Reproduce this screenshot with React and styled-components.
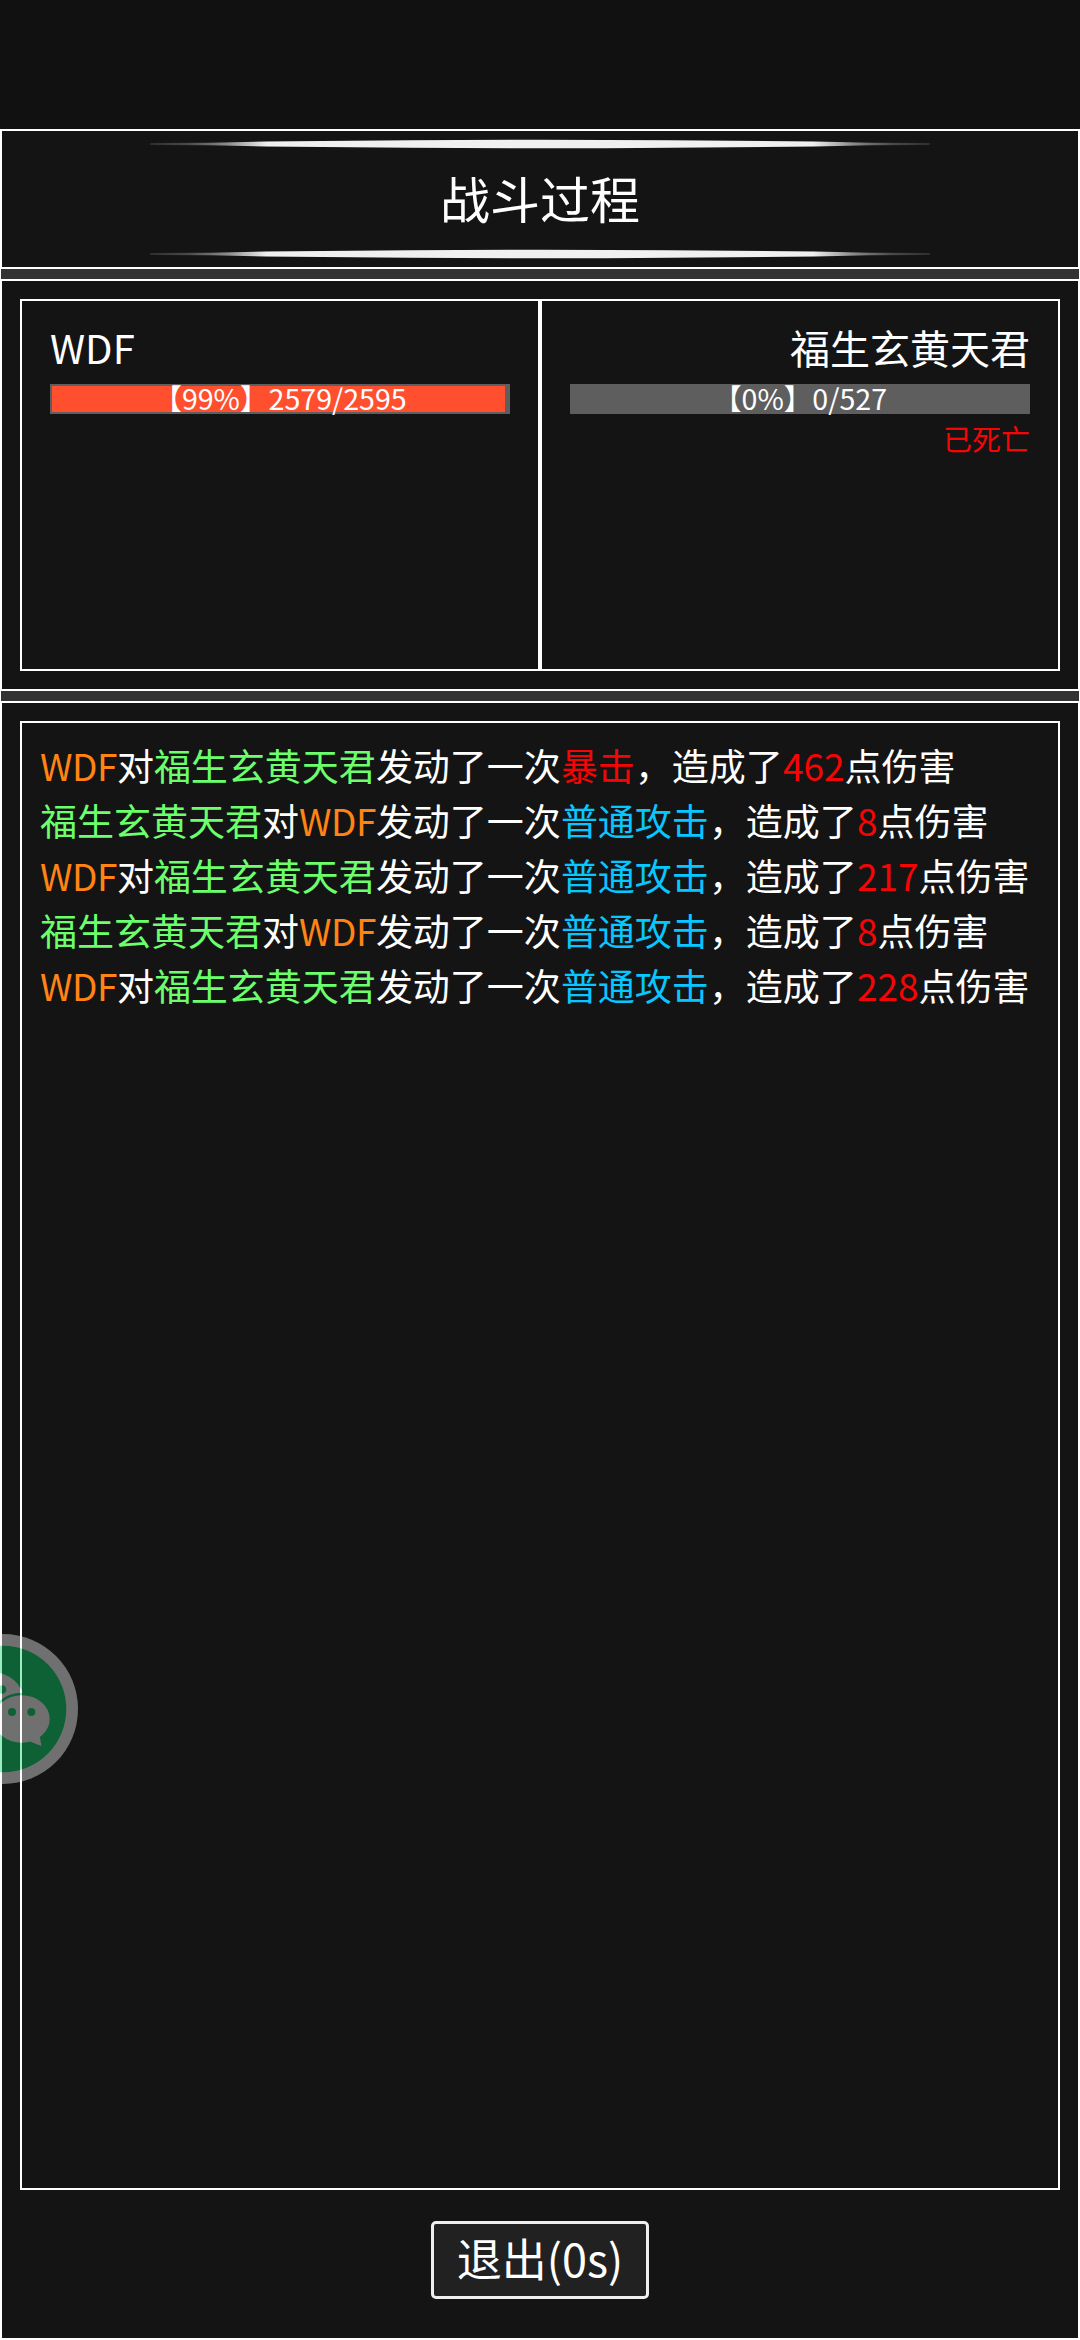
import React from "react";
import styled, { createGlobalStyle } from "styled-components";

const GlobalStyle = createGlobalStyle`
    *{
        box-sizing:border-box;
    }
    body{
        margin:0;
        background:#111111;
        color:#ffffff;
        font-family:"Noto Sans CJK SC", sans-serif;
    }
`;

const Container = styled.div`
    position:relative;
    display:flex;
    flex-direction:column;
    width:1080px;
    height:2340px;
    padding-top:129px;
    overflow:hidden;
`;

const Panel = styled.section`
    display:flex;
    flex-direction:column;
    height:${props => props.$height ? `${props.$height}px` : "auto"};
    flex:${props => props.$height ? "none" : "1"};
    border:2px solid #ffffff;
    background:#141414;
    padding:${props => props.$padding || "18px"};
`;

const Gap = styled.div`
    height:10px;
    flex:none;
    background:#333333;
    border:solid #ffffff;
    border-width:0 1px;
`;

const TitlePanel = styled(Panel)`
    align-items:center;
    justify-content:space-between;
`;

const Title = styled.h1`
    margin:0;
    padding-bottom:5px;
    font-size:50px;
    font-weight:400;
    line-height:60px;
`;

const Fighters = styled.div`
    display:flex;
    flex:1;
`;

const Fighter = styled.div`
    flex:1;
    display:flex;
    flex-direction:column;
    align-items:${props => props.$right ? "flex-end" : "flex-start"};
    border:2px solid #ffffff;
    padding:16px 28px;
`;

const Name = styled.div`
    font-size:40px;
    line-height:60px;
    margin-bottom:7px;
`;

const Hp = styled.div`
    position:relative;
    width:100%;
    height:30px;
    padding:2px;
    background:#5e5e5e;
`;

const HpFill = styled.div`
    height:26px;
    background:#ff4f2f;
`;

const HpText = styled.span`
    position:absolute;
    top:0;
    left:0;
    width:100%;
    text-align:center;
    font-size:28.6px;
    line-height:28px;
    white-space:pre;
`;

const Dead = styled.div`
    margin-top:4px;
    font-size:29px;
    line-height:40px;
    color:#f50505;
`;

const Log = styled.div`
    flex:1;
    border:2px solid #ffffff;
    padding:15px 18px;
`;

const Line = styled.p`
    margin:0;
    font-size:37px;
    line-height:55px;
    white-space:nowrap;
`;

const colors = {
    me: "#ff8414",
    enemy: "#6cff6c",
    skill: "#08c6ff",
    hurt: "#f50505"
};

const Word = styled.span`
    color:${props => colors[props.$type]};
    letter-spacing:${props => props.$type === "me" ? "-0.5px" : "normal"};
`;

const Footer = styled.div`
    display:flex;
    justify-content:center;
    align-items:center;
    height:148px;
    padding-bottom:8px;
`;

const ExitButton = styled.button`
    width:218px;
    height:78px;
    padding:0 0 4px;
    border:3px solid #eeeeee;
    border-radius:5px;
    background:#212121;
    color:#ffffff;
    font-family:inherit;
    font-size:45px;
    line-height:68px;
`;

const Floating = styled.svg`
    position:absolute;
    left:-72px;
    top:1634px;
    width:150px;
    height:150px;
    opacity:0.4;
`;

const Stroke = ({ id }) => (
    <svg width="780" height="10" viewBox="0 0 780 10">
        <defs>
            <linearGradient id={id}>
                <stop offset="0" stopColor="#f0f0f0" stopOpacity="0.12" />
                <stop offset="0.05" stopColor="#f0f0f0" stopOpacity="0.25" />
                <stop offset="0.1" stopColor="#f0f0f0" stopOpacity="0.55" />
                <stop offset="0.15" stopColor="#f0f0f0" />
                <stop offset="0.85" stopColor="#f0f0f0" />
                <stop offset="0.9" stopColor="#f0f0f0" stopOpacity="0.55" />
                <stop offset="0.95" stopColor="#f0f0f0" stopOpacity="0.25" />
                <stop offset="1" stopColor="#f0f0f0" stopOpacity="0.12" />
            </linearGradient>
        </defs>
        <path d="M0 4 L60 3.7 L115 2.6 L260 1.2 Q390 0.2 520 1.2 L665 2.6 L720 3.7 L780 4 V6 L720 6.3 L665 7.4 L520 8.8 Q390 9.8 260 8.8 L115 7.4 L60 6.3 L0 6Z" fill={`url(#${id})`} />
    </svg>
);

const Wechat = () => (
    <Floating viewBox="0 0 150 150">
        <circle cx="75" cy="75" r="75" fill="#fafafa" />
        <circle cx="75" cy="75" r="63.3" fill="#05d466" />
        <ellipse cx="63.5" cy="66" rx="32" ry="28" fill="#fafafa" />
        <circle cx="52" cy="55.5" r="4.3" fill="#05d466" />
        <circle cx="74" cy="55.5" r="4.3" fill="#05d466" />
        <ellipse cx="93.7" cy="85" rx="30.5" ry="26.2" fill="#05d466" />
        <ellipse cx="93.7" cy="85" rx="28" ry="23.7" fill="#fafafa" />
        <path d="M102 107.500L113.500 112L111.500 101Z" fill="#fafafa" />
        <circle cx="84" cy="78" r="4" fill="#05d466" />
        <circle cx="103.3" cy="78" r="4" fill="#05d466" />
    </Floating>
);

const me = { text: "WDF", type: "me" };
const enemy = { text: "福生玄黄天君", type: "enemy" };
const crit = { text: "暴击", type: "hurt" };
const normal = { text: "普通攻击", type: "skill" };

const logs = [
    { from: me, to: enemy, skill: crit, hurt: 462 },
    { from: enemy, to: me, skill: normal, hurt: 8 },
    { from: me, to: enemy, skill: normal, hurt: 217 },
    { from: enemy, to: me, skill: normal, hurt: 8 },
    { from: me, to: enemy, skill: normal, hurt: 228 }
];

const HpBar = ({ hp, max }) => (
    <Hp>
        <HpFill style={{ width: `${hp / max * 100}%` }} />
        <HpText>{`【${Math.floor(hp / max * 100)}%】${hp}/${max}`}</HpText>
    </Hp>
);

const App = () => (
    <>
        <GlobalStyle />
        <Container>
            <TitlePanel as="header" $height={140} $padding="8px 0">
                <Stroke id="strokeTop" />
                <Title>战斗过程</Title>
                <Stroke id="strokeBottom" />
            </TitlePanel>
            <Gap />
            <Panel $height={412}>
                <Fighters>
                    <Fighter>
                        <Name>WDF</Name>
                        <HpBar hp={2579} max={2595} />
                    </Fighter>
                    <Fighter $right>
                        <Name>福生玄黄天君</Name>
                        <HpBar hp={0} max={527} />
                        <Dead>已死亡</Dead>
                    </Fighter>
                </Fighters>
            </Panel>
            <Gap />
            <Panel $padding="18px 18px 0">
                <Log>
                    {logs.map((x, index) => (
                        <Line key={index}>
                            <Word $type={x.from.type}>{x.from.text}</Word>对
                            <Word $type={x.to.type}>{x.to.text}</Word>发动了一次
                            <Word $type={x.skill.type}>{x.skill.text}</Word>，造成了
                            <Word $type="hurt">{x.hurt}</Word>点伤害
                        </Line>
                    ))}
                </Log>
                <Footer>
                    <ExitButton>退出(0s)</ExitButton>
                </Footer>
            </Panel>
            <Wechat />
        </Container>
    </>
);

export default App;
